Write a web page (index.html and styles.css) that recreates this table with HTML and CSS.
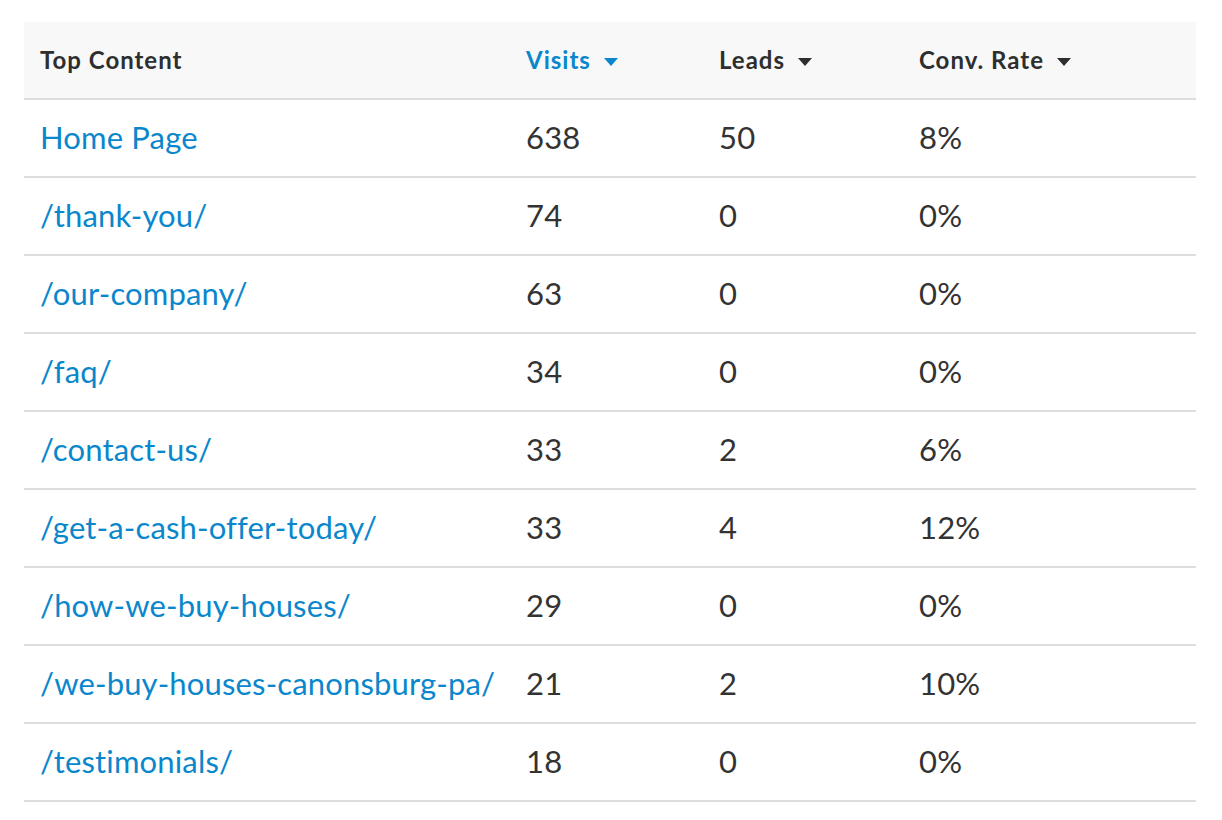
FILE: index.html
```html
<!DOCTYPE html>
<html>
<head>
<meta charset="utf-8">
<link rel="stylesheet" href="styles.css">
</head>
<body>
<div class="wrap">
<table class="report">
  <colgroup>
    <col class="c-page"><col class="c-visits"><col class="c-leads"><col class="c-rate">
  </colgroup>
  <thead>
    <tr>
      <th>Top Content</th>
      <th class="active">Visits<span class="caret"></span></th>
      <th>Leads<span class="caret"></span></th>
      <th>Conv. Rate<span class="caret"></span></th>
    </tr>
  </thead>
  <tbody>
    <tr><td><a href="#">Home Page</a></td><td>638</td><td>50</td><td>8%</td></tr>
    <tr><td><a href="#">/thank-you/</a></td><td>74</td><td>0</td><td>0%</td></tr>
    <tr><td><a href="#">/our-company/</a></td><td>63</td><td>0</td><td>0%</td></tr>
    <tr><td><a href="#">/faq/</a></td><td>34</td><td>0</td><td>0%</td></tr>
    <tr><td><a href="#">/contact-us/</a></td><td>33</td><td>2</td><td>6%</td></tr>
    <tr><td><a href="#">/get-a-cash-offer-today/</a></td><td>33</td><td>4</td><td>12%</td></tr>
    <tr><td><a href="#">/how-we-buy-houses/</a></td><td>29</td><td>0</td><td>0%</td></tr>
    <tr><td><a href="#">/we-buy-houses-canonsburg-pa/</a></td><td>21</td><td>2</td><td>10%</td></tr>
    <tr><td><a href="#">/testimonials/</a></td><td>18</td><td>0</td><td>0%</td></tr>
  </tbody>
</table>
</div>
</body>
</html>
```
FILE: styles.css
```css
html, body {
  margin: 0;
  padding: 0;
  background: #ffffff;
}
.wrap {
  padding: 22px 26px 0 24px;
}
.report {
  width: 1172px;
  border-collapse: collapse;
  table-layout: fixed;
  font-family: Lato, "Open Sans", sans-serif;
  color: #333333;
}
.c-page { width: 486px; }
.c-visits { width: 193px; }
.c-leads { width: 200px; }
.c-rate { width: 293px; }
.report th {
  background: #f8f8f8;
  height: 74px;
  padding: 0 0 2px 16px;
  text-align: left;
  font-size: 24px;
  font-weight: 700;
  letter-spacing: 1px;
  color: #2e2e2e;
  border-bottom: 2px solid #dddddd;
  vertical-align: middle;
}
.report th.active {
  color: #0a87cc;
}
.caret {
  display: inline-block;
  width: 0;
  height: 0;
  margin-left: 13px;
  vertical-align: middle;
  border-left: 7.5px solid transparent;
  border-right: 7.5px solid transparent;
  border-top: 8px solid currentColor;
}
.report td {
  height: 73px;
  padding: 0 0 3px 16px;
  font-size: 31px;
  letter-spacing: 0.15px;
  border-bottom: 2px solid #dddddd;
  vertical-align: middle;
  white-space: nowrap;
}
.report a {
  color: #0a87cc;
  text-decoration: none;
}
```
